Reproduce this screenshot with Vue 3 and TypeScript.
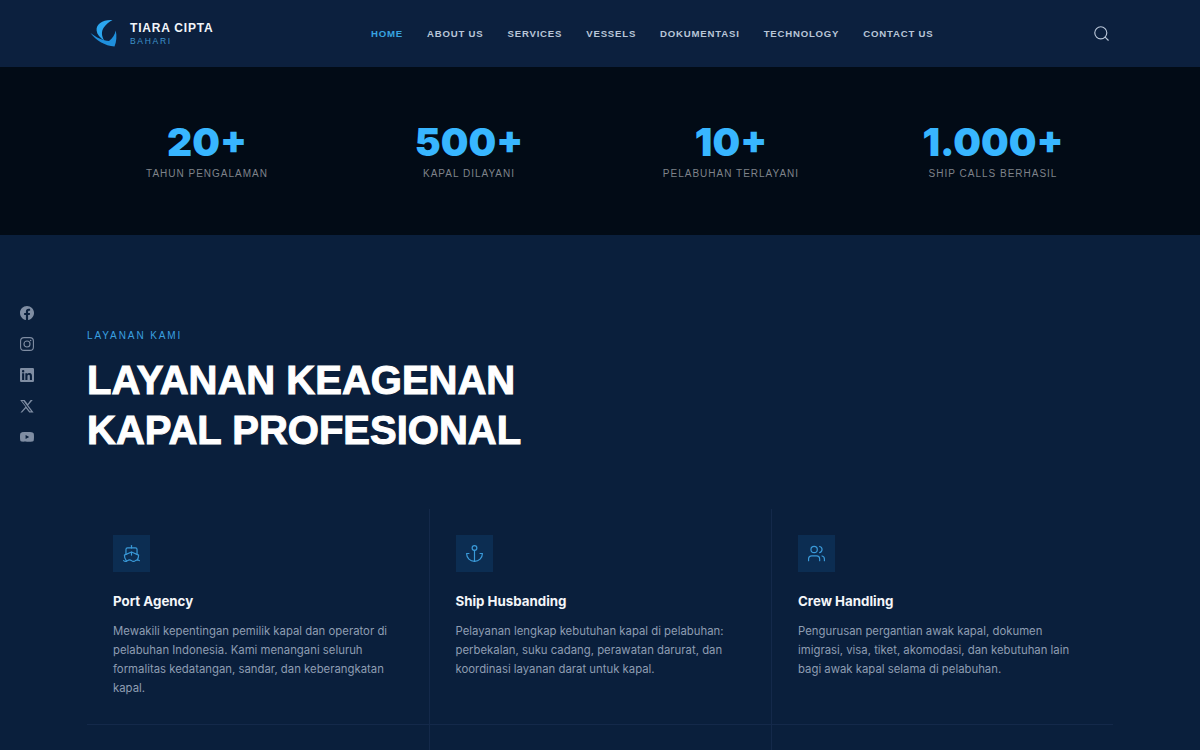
<script setup lang="ts">
const navLinks = ["Home", "About Us", "Services", "Vessels", "Dokumentasi", "Technology", "Contact Us"];

const stats = [
  { value: "20+", label: "Tahun Pengalaman" },
  { value: "500+", label: "Kapal Dilayani" },
  { value: "10+", label: "Pelabuhan Terlayani" },
  { value: "1.000+", label: "Ship Calls Berhasil" },
];

const services = [
  {
    icon: "ship",
    title: "Port Agency",
    text: "Mewakili kepentingan pemilik kapal dan operator di pelabuhan Indonesia. Kami menangani seluruh formalitas kedatangan, sandar, dan keberangkatan kapal.",
  },
  {
    icon: "anchor",
    title: "Ship Husbanding",
    text: "Pelayanan lengkap kebutuhan kapal di pelabuhan: perbekalan, suku cadang, perawatan darurat, dan koordinasi layanan darat untuk kapal.",
  },
  {
    icon: "crew",
    title: "Crew Handling",
    text: "Pengurusan pergantian awak kapal, dokumen imigrasi, visa, tiket, akomodasi, dan kebutuhan lain bagi awak kapal selama di pelabuhan.",
  },
];
</script>

<template>
  <div class="page">
    <aside class="socials">
      <svg viewBox="0 0 24 24" class="social"><path fill="currentColor" d="M24 12.07C24 5.4 18.63 0 12 0S0 5.4 0 12.07c0 6.03 4.39 11.02 10.13 11.93v-8.44H7.08v-3.49h3.05V9.41c0-3.02 1.79-4.69 4.53-4.69 1.31 0 2.68.24 2.68.24v2.97h-1.51c-1.49 0-1.96.93-1.96 1.89v2.25h3.33l-.53 3.49h-2.8V24C19.61 23.09 24 18.1 24 12.07z"/></svg>
      <svg viewBox="0 0 24 24" class="social" fill="none" stroke="currentColor" stroke-width="1.9"><rect x="1" y="1" width="22" height="22" rx="6"/><circle cx="12" cy="12" r="5.2"/><circle cx="18.2" cy="5.8" r="1.3" fill="currentColor" stroke="none"/></svg>
      <svg viewBox="0 0 24 24" class="social"><path fill="currentColor" fill-rule="evenodd" d="M2 0h20a2 2 0 0 1 2 2v20a2 2 0 0 1-2 2H2a2 2 0 0 1-2-2V2a2 2 0 0 1 2-2zm1.6 9v11.4h3.6V9H3.6zm1.8-5.6a2.1 2.1 0 1 0 0 4.2 2.1 2.1 0 0 0 0-4.2zM9.2 9v11.4h3.6v-5.7c0-1.5.3-3 2.2-3s1.9 1.7 1.9 3.1v5.6h3.6v-6.3c0-3.1-.7-5.4-4.3-5.4-1.7 0-2.9.9-3.4 1.8V9H9.2z"/></svg>
      <svg viewBox="0 0 24 24" class="social"><path fill="currentColor" d="M18.24 1.5h3.68l-8.04 9.19L23.34 23.25h-7.41l-5.8-7.58-6.64 7.58H.8l8.6-9.83L.33 1.5h7.59l5.24 6.93L18.24 1.5zm-1.29 19.54h2.04L5.83 3.6H3.64l13.31 17.44z"/></svg>
      <svg viewBox="0 0 24 24" class="social"><path fill="currentColor" fill-rule="evenodd" d="M23.5 6.2a3 3 0 0 0-2.1-2.1C19.5 3.5 12 3.5 12 3.5s-7.5 0-9.4.6A3 3 0 0 0 .5 6.2C0 8.1 0 12 0 12s0 3.9.5 5.8a3 3 0 0 0 2.1 2.1c1.9.6 9.4.6 9.4.6s7.5 0 9.4-.6a3 3 0 0 0 2.1-2.1c.5-1.9.5-5.8.5-5.8s0-3.9-.5-5.8zM9.6 15.6V8.4l6.2 3.6-6.2 3.6z"/></svg>
    </aside>

    <header class="navbar">
      <div class="brand">
        <svg class="logo" viewBox="0 0 28 28" width="28" height="28">
          <path fill="#2ba6ef" d="M22.5 1C13 .3 6 5 6.6 11.5c.4 4 3.4 7.4 8 10.5-3.4-5-3.4-10-.6-13.8C16 5.4 19 3 22.5 1z" />
          <path fill="#1f8fdc" d="M.5 14c5 7 14.5 13 24 13.5 2-5 2.5-10.5 1.2-16-.8 4-3 7.5-6.7 10.5C13 21.5 6 18.5.5 14z" />
        </svg>
        <div class="brand-text">
          <span class="brand-name">TIARA CIPTA</span>
          <span class="brand-sub">BAHARI</span>
        </div>
      </div>
      <nav class="nav-links">
        <a v-for="(link, i) in navLinks" :key="link" :class="['nav-link', { active: i === 0 }]">{{ link }}</a>
      </nav>
      <svg class="search" viewBox="0 0 24 24" width="17" height="17" fill="none" stroke="currentColor" stroke-width="1.6" stroke-linecap="round"><circle cx="11" cy="11" r="8.5" /><path d="M21.5 21.5l-4.4-4.4" /></svg>
    </header>

    <section class="stats">
      <div v-for="stat in stats" :key="stat.label" class="stat">
        <div class="stat-value">{{ stat.value }}</div>
        <div class="stat-label">{{ stat.label }}</div>
      </div>
    </section>

    <section class="services">
      <p class="eyebrow">Layanan Kami</p>
      <h2 class="heading">LAYANAN KEAGENAN<br />KAPAL PROFESIONAL</h2>
      <div class="grid">
        <article v-for="service in services" :key="service.title" class="card">
          <div class="icon-box">
            <svg viewBox="0 0 24 24" width="19" height="19" fill="none" stroke="currentColor" stroke-width="1.5" stroke-linecap="round" stroke-linejoin="round">
              <template v-if="service.icon === 'ship'">
                <path d="M12 10.19V14" />
                <path d="M12 2v3" />
                <path d="M19 13V7a2 2 0 0 0-2-2H7a2 2 0 0 0-2 2v6" />
                <path d="M19.38 20A11.6 11.6 0 0 0 21 14l-8.19-3.64a2 2 0 0 0-1.62 0L3 14a11.6 11.6 0 0 0 2.81 7.76" />
                <path d="M2 21c.6.5 1.2 1 2.5 1 2.5 0 2.5-2 5-2 1.3 0 1.9.5 2.5 1s1.2 1 2.5 1c2.5 0 2.5-2 5-2 1.3 0 1.9.5 2.5 1" />
              </template>
              <template v-else-if="service.icon === 'anchor'">
                <circle cx="12" cy="5" r="3" />
                <path d="M12 22V8" />
                <path d="M5 12H2a10 10 0 0 0 20 0h-3" />
              </template>
              <template v-else>
                <path d="M16 21v-2a4 4 0 0 0-4-4H6a4 4 0 0 0-4 4v2" />
                <circle cx="9" cy="7" r="4" />
                <path d="M22 21v-2a4 4 0 0 0-3-3.87" />
                <path d="M16 3.13a4 4 0 0 1 0 7.75" />
              </template>
            </svg>
          </div>
          <h3 class="card-title">{{ service.title }}</h3>
          <p class="card-text">{{ service.text }}</p>
        </article>
        <div v-for="n in 3" :key="n" class="card card-empty"></div>
      </div>
    </section>
  </div>
</template>

<style scoped>
.page {
  position: relative;
  height: 750px;
  overflow: hidden;
  background: #0a1f3c;
  font-family: Inter, "Liberation Sans", sans-serif;
}

.socials {
  position: absolute;
  left: 20px;
  top: 306px;
  display: flex;
  flex-direction: column;
  gap: 17px;
  color: #7f8da3;
}

.social {
  width: 14px;
  height: 14px;
}

.navbar {
  height: 67px;
  box-sizing: border-box;
  display: flex;
  align-items: center;
  padding: 0 90px;
  background: #0c203e;
  position: relative;
}

.brand {
  display: flex;
  align-items: center;
  gap: 12px;
}

.logo {
  display: block;
  margin-top: -1px;
}

.brand-text {
  display: flex;
  flex-direction: column;
  font-family: "Liberation Sans", sans-serif;
}

.brand-name {
  margin-top: 1px;
  color: #f2f5f9;
  font-size: 12px;
  font-weight: 700;
  letter-spacing: 0.8px;
  line-height: 15px;
}

.brand-sub {
  margin-top: -1px;
  color: #3f93cb;
  font-size: 8.5px;
  letter-spacing: 1.7px;
  line-height: 12px;
}

.nav-links {
  position: absolute;
  left: 371px;
  top: 0;
  height: 67px;
  display: flex;
  align-items: center;
  gap: 24px;
}

.nav-link {
  font-family: "Liberation Sans", sans-serif;
  font-size: 9.6px;
  font-weight: 700;
  letter-spacing: 0.8px;
  text-transform: uppercase;
  color: #b9c6d8;
}

.nav-link.active {
  color: #38a4e0;
}

.search {
  margin-left: auto;
  color: #b9c6d8;
}

.stats {
  height: 168px;
  box-sizing: border-box;
  padding: 0 87px 6px;
  display: grid;
  grid-template-columns: repeat(4, 1fr);
  gap: 22px;
  align-items: center;
  background: #020b16;
  text-align: center;
}

.stat-value {
  font-family: Inter, sans-serif;
  font-size: 39px;
  font-weight: 900;
  line-height: 48px;
  color: #38b6ff;
}

.stat-label {
  margin-top: 2px;
  font-family: "Liberation Sans", sans-serif;
  font-size: 10px;
  letter-spacing: 1px;
  text-transform: uppercase;
  color: #7f838a;
}

.services {
  padding: 95px 87px 0;
}

.eyebrow {
  margin: 0;
  font-family: "Liberation Sans", sans-serif;
  font-size: 10px;
  line-height: 12px;
  letter-spacing: 1.9px;
  text-transform: uppercase;
  color: #3aa0e0;
}

.heading {
  margin: 13px 0 0;
  font-family: "Liberation Sans", sans-serif;
  font-size: 40px;
  font-weight: 700;
  line-height: 50px;
  color: #fff;
  -webkit-text-stroke: 1px #fff;
}

.grid {
  margin-top: 54px;
  display: grid;
  grid-template-columns: 342.5px 342.5px 1fr;
}

.card {
  box-sizing: border-box;
  height: 216px;
  padding: 26px;
  border-right: 1px solid #14294a;
  border-bottom: 1px solid #14294a;
}

.card:nth-child(3n) {
  border-right: none;
}

.icon-box {
  width: 37px;
  height: 37px;
  display: flex;
  align-items: center;
  justify-content: center;
  background: #0c2d52;
  color: #3a9ad9;
}

.card-title {
  margin: 20px 0 0;
  font-size: 13.3px;
  font-weight: 700;
  line-height: 18px;
  color: #f4f6f9;
}

.card-text {
  margin: 12px 0 0;
  font-size: 11.35px;
  line-height: 19px;
  color: #8e9db2;
}
</style>

<style>
html,
body {
  margin: 0;
  background: #0a1f3c;
}
</style>
